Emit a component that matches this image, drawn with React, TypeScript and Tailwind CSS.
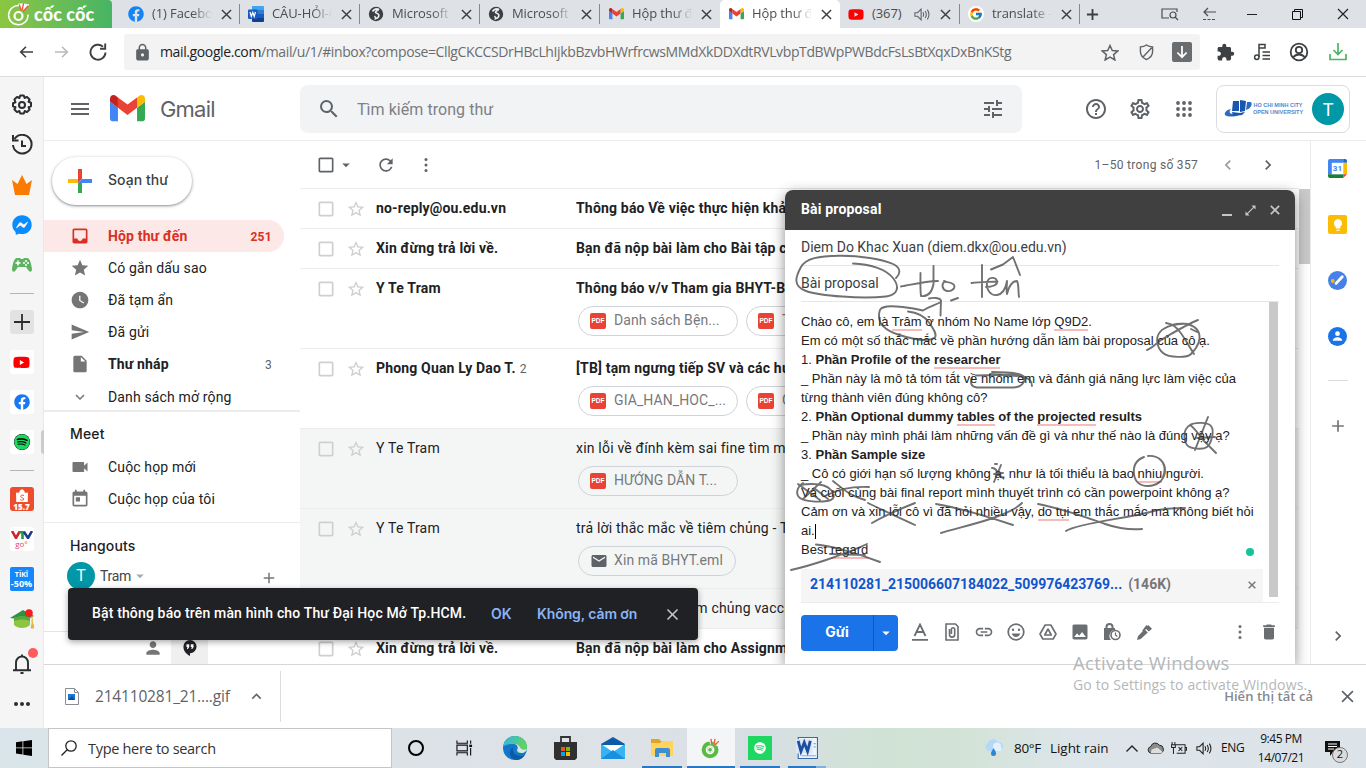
import React from "react";
import {
  MdInbox, MdStar, MdStarBorder, MdWatchLater, MdSend, MdInsertDriveFile, MdKeyboardArrowDown, MdVideocam,
  MdPerson, MdRefresh, MdMoreVert, MdSearch, MdTune, MdHelpOutline, MdChevronLeft, MdChevronRight,
  MdAdd, MdLink, MdImage, MdDelete, MdLock, MdExtension, MdClose, MdEmail, MdMenu, MdArrowDropDown,
  MdKeyboardArrowUp, MdLightbulb, MdToday, MdOutlineSettings, MdCheckBoxOutlineBlank,
} from "react-icons/md";
import { FaFacebook, FaSpotify, FaYoutube, FaFacebookMessenger } from "react-icons/fa";
import { FcGoogle } from "react-icons/fc";

const SEGOE = "font-['Open_Sans','Noto_Sans',sans-serif]";
const ROBOTO = "font-[Roboto,sans-serif]";
const GSANS = "font-[Inter,sans-serif]";

type Kids = { children?: React.ReactNode; className?: string };

function GmailLogo({ className = "" }: { className?: string }) {
  return (
    <svg viewBox="52 42 88 66" className={className}>
      <path fill="#4285f4" d="M58 108h14V74L52 59v43c0 3.32 2.69 6 6 6" />
      <path fill="#34a853" d="M120 108h14c3.32 0 6-2.69 6-6V59l-20 15" />
      <path fill="#fbbc04" d="M120 48v26l20-15v-8c0-7.42-8.47-11.65-14.4-7.2" />
      <path fill="#ea4335" d="M72 74V48l24 18 24-18v26L96 92" />
      <path fill="#c5221f" d="M52 51v8l20 15V48l-5.6-4.2c-5.94-4.45-14.4-.22-14.4 7.2" />
    </svg>
  );
}

function Cross({ className = "", w = 1.6 }: { className?: string; w?: number }) {
  return (
    <svg viewBox="0 0 12 12" className={className} fill="none" stroke="currentColor" strokeWidth={w}>
      <path d="M1 1l10 10M11 1L1 11" />
    </svg>
  );
}

function Dots({ className = "" }: { className?: string }) {
  return (
    <svg viewBox="0 0 20 20" className={className} fill="currentColor">
      <circle cx="10" cy="4.500" r="1.500" />
      <circle cx="10" cy="10" r="1.500" />
      <circle cx="10" cy="15.500" r="1.500" />
    </svg>
  );
}

function AppsGrid({ className = "" }: { className?: string }) {
  return (
    <svg viewBox="0 0 24 24" className={className} fill="currentColor">
      {[6, 12, 18].map((y) => [6, 12, 18].map((x) => <circle key={`${x}-${y}`} cx={x} cy={y} r="1.900" />))}
    </svg>
  );
}

function Speaker({ className = "" }: { className?: string }) {
  return (
    <svg viewBox="0 0 18 14" className={className} fill="none" stroke="currentColor" strokeWidth="1.2">
      <path d="M1 5h3l4-4v12L4 9H1zM10 4.500c1 1.500 1 3.500 0 5M12.500 3c1.700 2.500 1.700 5.500 0 8M15 1.500c2.300 3.500 2.300 7.500 0 11" />
    </svg>
  );
}

function Globe() {
  return (
    <svg viewBox="0 0 16 16" className="size-4">
      <circle cx="8" cy="8" r="7.200" fill="#3c4043" />
      <path d="M4.500 5.500C6 3 9 2.500 10.500 3.200 10 5 7.500 4.800 7.500 6.300c0 1.200 3 .700 3.300 2.500.200 1.500-1 3.200-3.300 4 .3-1.500-.2-2-1-2.800" fill="none" stroke="#e8eaed" strokeWidth="1.700" />
    </svg>
  );
}

function WordIcon() {
  return (
    <svg viewBox="0 0 16 16" className="size-4">
      <path d="M4 0h11a1 1 0 011 1v3.500H4z" fill="#41a5ee" />
      <path d="M4 4h12v4H4z" fill="#2b7cd3" />
      <path d="M4 8h12v4H4z" fill="#185abd" />
      <path d="M4 12h12v3a1 1 0 01-1 1H5a1 1 0 01-1-1z" fill="#103f91" />
      <rect y="3.500" width="9.500" height="9.500" rx="1" fill="#185abd" />
      <path d="M2 6l1.300 4.500L4.800 6.300l1.400 4.200L7.500 6" stroke="#fff" strokeWidth="1.200" fill="none" />
    </svg>
  );
}

function Tab({ icon, title, active, audio, noSep }: { icon: React.ReactNode; title: string; active?: boolean; audio?: boolean; noSep?: boolean }) {
  return (
    <div className={`relative flex h-7 w-[120px] shrink-0 items-center pl-2 ${active ? "rounded-t-[5px] bg-white" : ""}`}>
      <div className="flex size-4 shrink-0 items-center justify-center">{icon}</div>
      <div className={`ml-2 shrink-0 overflow-hidden whitespace-nowrap text-[13px] text-[#4a4d51] tracking-[-0.1px] ${audio ? "w-[34px]" : "w-[62px] [mask-image:linear-gradient(to_right,#000_65%,transparent_97%)]"}`}>{title}</div>
      {audio && <Speaker className="ml-[8px] h-[13px] w-[16px] shrink-0 text-[#5f6368]" />}
      <Cross className={`${audio ? "ml-[10px]" : "ml-[7px]"} size-[11px] shrink-0 text-[#3c4043]`} />
      {!noSep && <div className="ml-auto h-5 w-px bg-[#85888c]" />}
    </div>
  );
}

function CocCocMark({ className = "", line = "#fff" }: { className?: string; line?: string }) {
  return (
    <svg viewBox="0 0 24 24" className={className} fill="none" strokeLinecap="round">
      <path d="M12 3.500A9.700 9.700 0 1021 13" stroke={line} strokeWidth="1.500" />
      <circle cx="11.500" cy="14" r="4" stroke={line} strokeWidth="2.200" />
      <path d="M12 2l4 0-1 6zM17 2l5 1-5 5z" fill={line} stroke={line} strokeWidth="1" />
      <path d="M12.500 3l1.500 5M16.500 2l-1.500 6M21 4l-4.500 5" stroke="#f05a3c" strokeWidth="1.300" />
    </svg>
  );
}

function TabStrip() {
  return (
    <div className={`flex h-7 bg-[#dee1e6] ${SEGOE}`}>
      <div className="mr-2 flex w-28 items-center rounded-tr-[4px] bg-gradient-to-r from-[#8cc63f] to-[#45b464] pl-[7px]">
        <CocCocMark className="size-6" />
        <span className="ml-[3px] font-[Lato,sans-serif] text-[18px] leading-none font-black tracking-[0.1px] text-white">cốc cốc</span>
      </div>
      <Tab icon={<FaFacebook className="size-4 text-[#1284f5]" />} title="(1) Facebook" />
      <Tab icon={<WordIcon />} title="CÂU-HỎI-ÔN" />
      <Tab icon={<Globe />} title="Microsoft Teams" />
      <Tab icon={<Globe />} title="Microsoft Teams" />
      <Tab icon={<GmailLogo className="w-[15px]" />} title="Hộp thư đến" noSep />
      <Tab icon={<GmailLogo className="w-[15px]" />} title="Hộp thư đến" active noSep />
      <Tab icon={<FaYoutube className="size-[17px] text-[#f00]" />} title="(367)" audio />
      <Tab icon={<div className="flex size-4 items-center justify-center rounded-full bg-white"><FcGoogle className="size-3.5" /></div>} title="translate - G" />
      <div className="ml-1.5 flex flex-1 items-center">
        <svg viewBox="0 0 14 14" className="size-[13px]" stroke="#3c4043" strokeWidth="2"><path d="M7 1v12M1 7h12" /></svg>
        <svg viewBox="0 0 18 14" className="ml-[62px] h-[14px] w-[18px]" fill="none" stroke="#4a4d51" strokeWidth="1.200"><path d="M8 11H1V2h15v3M5 2v-.5" /><circle cx="12" cy="8" r="3" /><path d="M14 10l3 3" /></svg>
        <svg viewBox="0 0 14 14" className="ml-[23px] size-[14px]" fill="none" stroke="#4a4d51" strokeWidth="1.200"><path d="M14 5H2M6 1L2 5l4 4" /><path d="M1 12.500h12" strokeDasharray="3 1.500" /></svg>
        <div className="ml-[31px] h-px w-[10px] bg-[#222]" />
        <svg viewBox="0 0 11 11" className="ml-[35px] size-[11px]" fill="none" stroke="#111"><path d="M.5 2.500h8v8h-8zM2.500 2.500v-2h8v8h-2" /></svg>
        <Cross w={1.200} className="ml-[34px] size-[12px] text-[#222]" />
      </div>
    </div>
  );
}

function Toolbar() {
  return (
    <div className={`flex h-[49px] items-center border-b border-[#dadce0] bg-white ${SEGOE}`}>
      <svg viewBox="0 0 16 14" className="ml-[19px] h-[14px] w-[14px]" fill="none" stroke="#3c4043" strokeWidth="1.900"><path d="M16 7H2M8 1L2 7l6 6" /></svg>
      <svg viewBox="0 0 16 14" className="ml-[22px] h-[14px] w-[14px]" fill="none" stroke="#b8babd" strokeWidth="1.900"><path d="M0 7h14M8 1l6 6-6 6" /></svg>
      <svg viewBox="0 0 18 18" className="ml-[20px] size-[18px]" fill="none" stroke="#3c4043" strokeWidth="1.900"><path d="M16.500 9.500A7.500 7.500 0 1114 3.600" /><path d="M16.200 .5v5.200H11" /></svg>
      <div className="ml-[17px] flex h-9 w-[1076px] items-center rounded-[3px] bg-[#f3f3f3] pl-[9px]">
        <MdLock className="size-[19px] text-[#5f6368]" />
        <div className="ml-2 w-[941px] whitespace-nowrap pb-px text-[14px] tracking-[-0.38px] text-[#6a6d70]">
          <span className="text-[#202124]">mail.google.com</span>/mail/u/1/#inbox?compose=CllgCKCCSDrHBcLhIjkbBzvbHWrfrcwsMMdXkDDXdtRVLvbpTdBWpPWBdcFsLsBtXqxDxBnKStg
        </div>
        <svg viewBox="0 0 18 17" className="h-[17px] w-[18px]" fill="none" stroke="#5f6368" strokeWidth="1.500"><path d="M9 1.500l2.300 5 5.500.500-4.200 3.600 1.300 5.400L9 13.200 4.100 16l1.300-5.400L1.200 7l5.500-.500z" /></svg>
        <svg viewBox="0 0 16 18" className="ml-[20px] h-[17px] w-[15px]" fill="none" stroke="#5f6368" strokeWidth="1.500"><path d="M8 1c2 1.500 4 2 6.500 2v5c0 4-3 7-6.500 8.500C4.500 15 1.500 12 1.500 8V3C4 3 6 2.500 8 1zM4 14L13.500 4" /></svg>
        <div className="ml-[18px] flex size-5 items-center justify-center rounded-[2px] bg-[#6a6d70]">
          <svg viewBox="0 0 12 14" className="h-[13px] w-3" fill="none" stroke="#fff" strokeWidth="1.900"><path d="M6 0v12M1 7l5 5 5-5" /></svg>
        </div>
      </div>
      <MdExtension className="ml-[16px] size-[19px] text-[#3c4043]" />
      <svg viewBox="0 0 18 18" className="ml-[18px] size-[18px]" fill="none" stroke="#3c4043" strokeWidth="1.500"><path d="M6 14V1.500h6V5H6M9.500 9H17M9.500 12.500H17M9.500 16H17" /><circle cx="3.800" cy="14.200" r="2.200" /></svg>
      <svg viewBox="0 0 20 20" className="ml-[18px] size-[20px]" fill="none" stroke="#3c4043" strokeWidth="1.800"><circle cx="10" cy="10" r="8.300" /><circle cx="10" cy="8" r="3.200" /><path d="M4 15.500c3-4 9-4 12 0" /></svg>
      <svg viewBox="0 0 18 18" className="ml-[20px] size-[18px]" fill="none" stroke="#4bb563" strokeWidth="1.700"><path d="M9 0v11M4.500 7L9 11.500 13.500 7M1 11v5.500h16V11" /></svg>
    </div>
  );
}

function Cell({ children, className = "" }: Kids) {
  return <div className={`flex h-10 shrink-0 items-center justify-center ${className}`}>{children}</div>;
}

function Rail() {
  return (
    <div className={`flex w-11 shrink-0 flex-col border-r border-[#e8e8e8] bg-[#f5f5f5] pt-2 ${SEGOE}`}>
      <Cell><svg viewBox="0 0 22 22" className="size-[22px]" fill="none" stroke="#2b2d30" strokeWidth="2"><circle cx="11" cy="11" r="3" /><path strokeLinejoin="round" d="M9.200 1.500h3.600l.8 2.500 2.400-1.100 2.600 2.600-1.100 2.300 2.500.900v3.600l-2.500.800 1.100 2.400-2.600 2.600-2.300-1.100-.900 2.500H9.200L8.400 17 6 18.100l-2.600-2.600L4.500 13.200 2 12.300V9.200l2.500-.9L3.400 5.500 6 2.900 8.400 4z" /></svg></Cell>
      <Cell><svg viewBox="0 0 22 22" className="size-[22px]" fill="none" stroke="#2b2d30" strokeWidth="2"><path d="M3.500 5A9.300 9.300 0 112 11M2 1v5.500h5.500M11 6.500V12h4" /></svg></Cell>
      <Cell><svg viewBox="0 0 20 20" className="size-5" fill="#fb7a00"><path d="M0 5l5.500 4L10 0l4.500 9L20 5l-3 15H3z" /></svg></Cell>
      <Cell><FaFacebookMessenger className="size-5 text-[#0a8cff]" /></Cell>
      <Cell><svg viewBox="0 0 20 14" className="h-[14px] w-5"><path d="M5 0h3l1 1h2l1-1h3c3 0 4 5 5 11 0 3-2 3.500-3.500 1.500L14 9H6l-2.500 3.500C2 14.500 0 14 0 11 1 5 2 0 5 0z" fill="#5db35f" /><path d="M3.500 5h5M6 2.500v5" stroke="#fff" strokeWidth="1.500" /><circle cx="14" cy="3" r="1" fill="#fff" /><circle cx="14" cy="7" r="1" fill="#fff" /><circle cx="12" cy="5" r="1" fill="#fff" /><circle cx="16" cy="5" r="1" fill="#fff" /></svg></Cell>
      <div className="flex h-[17px] items-center justify-center"><div className="h-px w-6 bg-[#b5b5b5]" /></div>
      <Cell><div className="flex size-6 items-center justify-center rounded-[3px] bg-[#e2e2e2]"><svg viewBox="0 0 16 16" className="size-4" stroke="#2b2d30" strokeWidth="1.800"><path d="M8 0v16M0 8h16" /></svg></div></Cell>
      <Cell><div className="flex size-6 items-center justify-center rounded-[3px] bg-white"><FaYoutube className="size-[17px] text-[#f00]" /></div></Cell>
      <Cell><div className="flex size-6 items-center justify-center rounded-[3px] bg-white"><FaFacebook className="size-[16px] text-[#1877f2]" /></div></Cell>
      <Cell className="relative"><div className="flex size-6 items-center justify-center rounded-[3px] bg-white"><FaSpotify className="size-[16px] rounded-full bg-black text-[#1ed760]" /></div><div className="absolute right-[-1px] top-2 h-6 w-[3px] rounded-l bg-[#ccc]" /></Cell>
      <div className="flex h-[17px] items-center justify-center"><div className="h-px w-6 bg-[#b5b5b5]" /></div>
      <Cell><div className="flex size-6 flex-col items-center justify-end rounded-[3px] bg-[#ee4d2d]"><svg viewBox="0 0 12 13" className="h-[13px] w-3"><path d="M0 4h12l-.6 9H.6zM3.500 4C3.500-.5 8.500-.5 8.500 4" fill="#fff" stroke="#fff" strokeWidth=".6" /><path d="M8 6.500C6 5.500 4.300 6.500 4.800 7.700s3 1 3 2.300-2 1.600-3.600.6" fill="none" stroke="#ee4d2d" strokeWidth="1" /></svg><span className="text-[8px] leading-[9px] font-extrabold text-white">15.7</span></div></Cell>
      <Cell><div className="flex size-6 flex-col items-center rounded-[3px] bg-white pt-1"><svg viewBox="0 0 22 8" className="h-[8px] w-[22px]" fill="none" strokeWidth="2.600"><path d="M1 0l4 7 4-7" stroke="#d2232a" /><path d="M8 1.300h6M11.500 1v7" stroke="#1a9c47" /><path d="M13 1l4 6 4-7" stroke="#233a8e" /></svg><span className="text-[8px] leading-[9px] text-[#e0455a]">go°</span></div></Cell>
      <Cell><div className="flex size-6 flex-col items-center justify-center rounded-[2px] bg-[#1387fb] text-white"><span className="text-[7px] leading-[9px] font-bold">TÏKÎ</span><span className="text-[9px] leading-[10px] font-bold">-50%</span></div></Cell>
      <Cell><svg viewBox="0 0 24 20" className="h-5 w-6"><path d="M0 9L13 1l11 6-8 4z" fill="#2f9144" /><path d="M4 9c4-2 12-2 16 0v7c-4 4-12 4-16 0z" fill="#8cc63f" /><path d="M4 9c4-2 12-2 16 0v3c-5-2-11-2-16 0z" fill="#55a744" /><path d="M22 7v8l-1 4h3l-1-4" stroke="#e6b23c" fill="#e6b23c" /><circle cx="19" cy="4" r="3.800" fill="#f81b1b" /></svg></Cell>
      <Cell className="relative mt-[5px]"><svg viewBox="0 0 18 20" className="h-5 w-[18px]" fill="none" stroke="#2b2d30" strokeWidth="1.900"><path d="M3 15.500V8.500a6 6 0 0112 0v7M0 16.200h18M7.500 19h3M9 .5V2" /></svg><div className="absolute right-[5px] top-[4px] size-[10px] rounded-full bg-[#ff5a5f]" /></Cell>
      <Cell className="gap-[2px]"><i className="size-1 rounded-full bg-[#2b2d30]" /><i className="size-1 rounded-full bg-[#2b2d30]" /><i className="size-1 rounded-full bg-[#2b2d30]" /></Cell>
    </div>
  );
}

function OuLogo() {
  return (
    <svg viewBox="0 0 28 18" className="h-[18px] w-7">
      <path d="M7 9C2 10 0 13 1 15c3 2 9 2 14 0l6-3c-5 2-13 3-15 1-1-1 0-3 1-4z" fill="#2a6cc0" />
      <path d="M9 1l6 0v10H8zM16 0l6 1-1 10-5 1z" fill="#1a56ad" />
      <path d="M23 2h4c2 3-1 7-5 8z" fill="#2a6cc0" />
      <path d="M8 12l8 1 5-1-3 3-9 1z" fill="#1a56ad" />
    </svg>
  );
}

function GmailHeader() {
  return (
    <div className="flex h-16 shrink-0 items-center border-b border-[#ebebeb] bg-white">
      <MdMenu className="ml-6 size-6 text-[#5f6368]" />
      <GmailLogo className="ml-[18px] w-[35px]" />
      <span className={`ml-[15px] w-[140px] pt-px text-[22px] tracking-[-0.8px] text-[#5f6368] ${GSANS}`}>Gmail</span>
      <div className="flex h-12 w-[722px] items-center rounded-lg bg-[#f1f3f4] pl-[17px] pr-[17px]">
        <MdSearch className="size-6 text-[#5f6368]" />
        <span className={`ml-4 flex-1 pt-0.5 text-[16px] tracking-[0.05px] text-[#7d8085] ${ROBOTO}`}>Tìm kiếm trong thư</span>
        <MdTune className="size-6 text-[#5f6368]" />
      </div>
      <MdHelpOutline className="ml-[62px] size-6 text-[#5f6368]" />
      <MdOutlineSettings className="ml-5 size-6 text-[#5f6368]" />
      <AppsGrid className="ml-5 size-6 text-[#5f6368]" />
      <div className="ml-5 flex h-12 w-[134px] items-center rounded-lg border border-[#dadce0] pl-[7px]">
        <OuLogo />
        <div className="ml-px w-[50px] text-center font-['Liberation_Sans',sans-serif] text-[5.500px] leading-[7px] font-bold text-[#5587c8]">
          <div className="whitespace-nowrap">HO CHI MINH CITY</div>
          <div className="whitespace-nowrap">OPEN UNIVERSITY</div>
        </div>
        <div className={`ml-[9px] flex size-8 items-center justify-center rounded-full bg-[#0097a7] pt-px text-[18px] text-white ${ROBOTO}`}>T</div>
      </div>
    </div>
  );
}

function NavRow({ icon, label, count, kind = "" }: { icon: React.ReactNode; label: string; count?: string; kind?: string }) {
  const tone = kind === "on" ? "bg-[#fce8e6] text-[#d93025] font-bold" : kind === "bold" ? "font-bold text-[#202124]" : "text-[#202124]";
  const iconTone = kind === "on" ? "text-[#d93025]" : "text-[#747577]";
  return (
    <div className={`flex h-8 w-60 items-center rounded-r-2xl pl-[26px] pr-3 text-[14px] ${ROBOTO} ${tone}`}>
      <div className={`flex size-5 items-center justify-center ${iconTone}`}>{icon}</div>
      <span className="ml-[18px] flex-1 whitespace-nowrap tracking-[0.15px]">{label}</span>
      <span className={`pt-px text-[12px] tracking-[0.3px] ${kind === "on" ? "" : "font-normal text-[#5f6368]"}`}>{count}</span>
    </div>
  );
}

function GmailNav() {
  return (
    <div className="flex w-64 shrink-0 flex-col bg-white">
      <div className="ml-2 mt-4 flex h-12 w-[140px] items-center rounded-full bg-white pl-4 shadow-[0_1px_2px_0_rgba(60,64,67,.4),0_1px_3px_1px_rgba(60,64,67,.18)]">
        <svg viewBox="0 0 24 24" className="size-6"><path fill="#ea4335" d="M10 0h4v10l-4 4z" /><path fill="#4285f4" d="M24 10v4H10l4-4z" /><path fill="#34a853" d="M10 14h4v10h-4z" /><path fill="#fbbc04" d="M0 10h10v4H0z" /></svg>
        <span className={`ml-4 pb-[3px] text-[14px] font-medium tracking-[0.05px] text-[#3c4043] ${GSANS}`}>Soạn thư</span>
      </div>
      <div className="mt-[15px] h-[192px] border-b-2 border-[#ececec]">
        <NavRow kind="on" icon={<MdInbox className="size-5" />} label="Hộp thư đến" count="251" />
        <NavRow icon={<MdStar className="size-5" />} label="Có gắn dấu sao" />
        <NavRow icon={<MdWatchLater className="size-5" />} label="Đã tạm ẩn" />
        <NavRow icon={<MdSend className="size-5" />} label="Đã gửi" />
        <NavRow kind="bold" icon={<MdInsertDriveFile className="size-5" />} label="Thư nháp" count="3" />
        <div className="pt-px"><NavRow icon={<MdKeyboardArrowDown className="size-[18px]" />} label="Danh sách mở rộng" /></div>
      </div>
      <div className="h-[111px] border-b border-[#ebebeb] pt-[7px]">
        <div className={`flex h-8 items-center pb-[3px] pl-[26px] text-[14px] font-medium tracking-[0.15px] text-[#202124] ${GSANS}`}>Meet</div>
        <NavRow icon={<MdVideocam className="size-5" />} label="Cuộc họp mới" />
        <NavRow icon={<MdToday className="size-5" />} label="Cuộc họp của tôi" />
      </div>
      <div className="h-[109px] border-b border-[#e4e4e4] pt-[7px]">
        <div className={`flex h-8 items-center pb-0.5 pl-[26px] text-[14px] font-medium tracking-[0.1px] text-[#202124] ${GSANS}`}>Hangouts</div>
        <div className={`flex h-7 items-center pl-[23px] text-[14px] text-[#444] ${ROBOTO}`}>
          <div className="flex size-7 items-center justify-center rounded-full bg-[#0097a7] text-[16px] text-white">T</div>
          <span className="ml-[5px] tracking-[-0.3px]">Tram</span>
          <MdArrowDropDown className="size-[18px] text-[#aaa]" />
          <MdAdd className="ml-[111px] mt-1 size-[18px] text-[#777]" />
        </div>
      </div>
      <div className="flex flex-1 justify-center pr-[2px]">
        <div className="flex w-[37px] items-center justify-center"><MdPerson className="size-[20px] text-[#757575]" /></div>
        <div className="flex w-[37px] items-center justify-center bg-[#efefef]">
          <svg viewBox="0 0 14 17" className="h-[16px] w-[14px]"><path d="M7 0a7 7 0 110 14v3C3 15 0 12 0 7a7 7 0 017-7z" fill="#202124" /><path d="M3.200 4.500h3v3L4.800 9.500h-1l.5-2H3.200zM7.800 4.500h3v3L9.400 9.500h-1l.5-2H7.800z" fill="#fff" /></svg>
        </div>
      </div>
    </div>
  );
}

function Pdf({ name, className = "w-40" }: { name: string; className?: string }) {
  return (
    <div className={`flex h-[30px] shrink-0 items-center rounded-full border border-[#cfd2d8] pl-[11px] ${className}`}>
      {name.endsWith(".eml") ? (
        <MdEmail className="size-[18px] text-[#5f6368]" />
      ) : (
        <div className="flex size-4 items-center justify-center rounded-[2px] bg-[#ea4335] font-['Liberation_Sans',sans-serif] text-[6.500px] font-bold text-white">PDF</div>
      )}
      <span className={`${name.endsWith(".eml") ? "ml-[6px]" : "ml-2"} whitespace-nowrap pb-px text-[14px] tracking-[0.1px] text-[#77797c]`}>{name}</span>
    </div>
  );
}

type Mail = { from: string; n?: string; subject: string; read?: boolean; files?: string[] };
const MAILS: Mail[] = [
  { from: "no-reply@ou.edu.vn", subject: "Thông báo Về việc thực hiện khảo sát" },
  { from: "Xin đừng trả lời về.", subject: "Bạn đã nộp bài làm cho Bài tập của" },
  { from: "Y Te Tram", subject: "Thông báo v/v Tham gia BHYT-BHTN", files: ["Danh sách Bện...", "Thông báo"] },
  { from: "Phong Quan Ly Dao T.", n: "2", subject: "[TB] tạm ngưng tiếp SV và các hướng", files: ["GIA_HAN_HOC_...", "GIA_HAN"] },
  { from: "Y Te Tram", subject: "xin lỗi về đính kèm sai fine tìm mã", read: true, files: ["HƯỚNG DẪN T..."] },
  { from: "Y Te Tram", subject: "trả lời thắc mắc về tiêm chủng - Trả", read: true, files: ["Xin mã BHYT.eml"] },
  { from: "Y Te Tram", subject: "thông báo tiêm chủng vaccine", read: true },
  { from: "Xin đừng trả lời về.", subject: "Bạn đã nộp bài làm cho Assignment" },
];

function MailRow({ m }: { m: Mail }) {
  return (
    <div className={`flex shrink-0 items-start border-b border-[#ebeced] text-[14px] text-[#202124] ${ROBOTO} ${m.files ? "h-20" : "h-10"} ${m.read ? "bg-[#f4f6f6]" : "bg-white"}`}>
      <div className="flex h-10 w-[76px] items-center">
        <MdCheckBoxOutlineBlank className="ml-4 size-5 text-[#cfcfcf]" />
        <MdStarBorder className="ml-2.5 size-5 text-[#cfcfcf]" />
      </div>
      <div className={`flex h-10 w-[200px] items-center pb-px tracking-[0.2px] ${m.read ? "" : "font-bold"}`}>
        <span className={m.read ? "" : "tracking-[0.17px]"}>{m.from}</span>
        {m.n && <span className="ml-1 text-[12px] font-normal text-[#5f6368]">{m.n}</span>}
      </div>
      <div className="flex-1 overflow-hidden">
        <div className={`flex h-[37px] items-center pt-0.5 whitespace-nowrap ${m.read ? "tracking-[0.2px]" : "font-bold tracking-[0.18px]"} ${m.subject.includes("vaccine") ? "ml-[35px]" : ""}`}>{m.subject}</div>
        {m.files && (
          <div className="ml-0.5 flex gap-2">
            {m.files.map((f) => <Pdf key={f} name={f} className={f.endsWith(".eml") ? "w-[158px]" : "w-40"} />)}
          </div>
        )}
      </div>
    </div>
  );
}

function MailList() {
  return (
    <div className="flex w-[1010px] shrink-0 flex-col overflow-hidden bg-white">
      <div className={`flex h-[47px] shrink-0 items-center text-[#5f6368] ${ROBOTO}`}>
        <MdCheckBoxOutlineBlank className="ml-4 size-5 text-[#5f6368]" />
        <MdArrowDropDown className="ml-px size-[18px] text-[#5f6368]" />
        <MdRefresh className="ml-[21px] size-5" />
        <Dots className="ml-5 size-5" />
        <span className="ml-auto text-[12px] tracking-[0.3px]">1–50 trong số 357</span>
        <MdChevronLeft className="ml-5 size-5 text-[#9b9da0]" />
        <MdChevronRight className="ml-5 mr-8 size-5" />
      </div>
      <div className="flex min-h-0 flex-1">
        <div className="flex flex-1 flex-col overflow-hidden border-t border-[#ebeced]">
          {MAILS.map((m, i) => <MailRow key={i} m={m} />)}
        </div>
        <div className="w-[11px]"><div className="mt-px h-[75px] bg-[#c9c9c9]" /></div>
      </div>
    </div>
  );
}

function SidePanel() {
  return (
    <div className="flex flex-1 flex-col items-center border-l border-[#ebebeb] bg-white pr-[2px] pt-[18px]">
      <svg viewBox="0 0 20 20" className="size-[19px]"><path d="M2 0h14v16H0V2a2 2 0 012-2z" fill="#4285f4" /><path d="M16 0h2a2 2 0 012 2v2h-4z" fill="#1967d2" /><path d="M16 4h4v12h-4z" fill="#fbbc04" /><path d="M0 16h16v4H2a2 2 0 01-2-2z" fill="#188038" /><path d="M16 16h4l-4 4z" fill="#ea4335" /><path d="M4 4h12v12H4z" fill="#fff" /><text x="10" y="13" textAnchor="middle" fontSize="8.500" fontWeight="700" fill="#4285f4" fontFamily="Roboto, sans-serif">31</text></svg>
      <div className="mt-[37px] flex size-[19px] items-center justify-center rounded-[2px] bg-[#fbbc04]"><MdLightbulb className="size-[14px] text-white" /></div>
      <svg viewBox="0 0 20 20" className="mt-[37px] size-[19px]"><circle cx="10" cy="10" r="10" fill="#4680e8" /><circle cx="5" cy="10.500" r="2" fill="#fbbc04" /><path d="M8.500 13L15 6" stroke="#fff" strokeWidth="3" strokeLinecap="round" /></svg>
      <svg viewBox="0 0 20 20" className="mt-[37px] size-[19px]"><circle cx="10" cy="10" r="10" fill="#1a73e8" /><circle cx="10" cy="7" r="2.500" fill="#fff" /><path d="M5 14.500c0-5 10-5 10 0z" fill="#fff" /></svg>
      <div className="mt-[34px] h-px w-5 bg-[#dadce0]" />
      <MdAdd className="mt-[35px] size-5 text-[#747577]" />
      <MdChevronRight className="mb-[18px] mt-auto size-5 text-[#5f6368]" />
    </div>
  );
}

function U({ children }: Kids) {
  return <span className="border-b-2 border-[#f5bcba]">{children}</span>;
}

function Scribbles() {
  return (
    <svg viewBox="785 190 510 474" className="pointer-events-none absolute inset-0 h-full w-full" fill="none" stroke="#3a3a3a" strokeOpacity=".72" strokeWidth="1.900" strokeLinecap="round" strokeLinejoin="round">
      <path d="M853 263.500C870 264 886 269 893 278S898 295 886 296.500C862 299 820 296 806 291S796 276 801 267s18-11 38-11.300 44 3.500 54 8.300 6 11 3 14" />
      <path d="M901 286.500c10-1.500 22-5 37-5.500M920.500 273c0 8-.5 16 .5 23 7 1 11-4 12.500-12v-18M945 281c-4 3-3 9 2 10s10-4 6-7-7-1-9-3M951 300.500l7-2.500" />
      <path d="M982 265v32M971.500 283c9-1 18-1 26-1.500M986 287c6 0 12-2 11-6s-9-5-10 2 4 13 10 12 9-8 10-14c0 5-1 9 0 13 2-8 5-13 10-13 2 4 1 9 2 16M991 269.500l12-5 10-7.500 7 18" />
      <path d="M908 311.500c9 1 16 4 21 11s8 12 6 15c-8 5-25 1-37-3s-19-10-19-18 2-9 8-10 24 1 36 4c6-4 11-5 17-8M929 298.500c4-1 11-1 12 2l-.500 15" />
      <path d="M1147 350c6-2 10-8 17-12s24-14 34-18M1166 323c7 1 10 4 14 9s9 14 14 22M1172 325c10-3 22-1 26 6s0 16-7 23c-4 4-22 4-28-1s-8-15-3-21 17-9 28-8M1191 329l6 3" />
      <path d="M972 378c-2 5-1 9 5 9.500h36c7 0 11-4 12-9l-9-4-40 1M992 372c14 0 28 1 31 4s8 1 9 10M990 374l27 2" />
      <path d="M1190 425c3-2 17-4 21 1s0 18-4 21-17 2-20-2-5-15 3-20M1208 417l-13 33M1190 425c6 4 10 12 15 17l11 11M1197 438l18-1" />
      <path d="M1144 457c-8 3-11 9-10 17s6 12 14 12 16-5 17-14-6-17-17-16M1163 463c2 4 2 9 0 14" />
      <path d="M992 468c4 0 5 3 6 6l5 4M1001 465c-2 5-4 10-7 17M995 464h2M994 474l9-1" />
      <path d="M799 485c14-2 27-1 32 5s3 10-4 11-22 1-27-3-3-11 3-15M803 499l18-17M798 484l22 16M814 488l14 11M833 481c9 7 17 15 32 19M827 495c10-5 24-9 42-8" />
      <path d="M868 503c12 6 30 14 47 22M872 523c12-7 28-14 43-20M936 504c18 3 50 12 77 21M941 533c18-6 66-15 81-30M1038 504c26 5 50 14 67 20 12 4 25 6 37 5M1066 531c12-8 64-13 84-19 12-4 24-4 35-4" />
      <path d="M816 544.500c15 1 45 10 64 17.500M791 570c18-4 50-14 76-26M830 554l35 1" />
    </svg>
  );
}

function Compose() {
  return (
    <div className={`absolute left-[785px] top-[113px] flex h-[474px] w-[510px] flex-col rounded-t-lg bg-white shadow-[0_4px_14px_rgba(0,0,0,.45)] ${ROBOTO}`}>
      <div className="flex h-10 shrink-0 items-center rounded-t-lg bg-[#404040] pl-4 pr-[15px] text-[14px] font-bold text-white">
        <span className="flex-1 pb-0.5 tracking-[0.17px]">Bài proposal</span>
        <div className="mt-[9px] h-[2px] w-[10px] bg-[#c4c7ca]" />
        <svg viewBox="0 0 12 12" className="ml-[13px] size-[11px]" fill="#c4c7ca" stroke="#c4c7ca"><path d="M2 10L10 2" strokeWidth="1.300" /><path d="M7 .5h4.500V5zM.5 7v4.500H5z" stroke="none" /></svg>
        <Cross w={2} className="ml-[14px] size-[10px] text-[#c4c7ca]" />
      </div>
      <div className="mx-4 flex h-9 shrink-0 items-center border-b border-[#e6e6e6] text-[14px] tracking-[-0.01px] text-[#3c4043]">Diem Do Khac Xuan (diem.dkx@ou.edu.vn)</div>
      <div className="mx-4 flex h-9 shrink-0 items-center border-b border-[#e6e6e6] text-[14px] text-[#3c4043]">Bài proposal</div>
      <div className="flex h-[295px] shrink-0 pl-4">
        <div className="flex w-[468px] flex-col pt-[10px]">
          <div className="h-[257px] whitespace-nowrap font-['Liberation_Sans',sans-serif] text-[13px] leading-[19px] text-[#222]">
            <p>Chào cô, em là <U>Trâm</U> ở nhóm No Name lớp <U>Q9D2</U>.</p>
            <p>Em có một số thắc mắc về phần hướng dẫn làm bài proposal của cô ạ.</p>
            <p>1. <b>Phần Profile of the <U>researcher</U></b></p>
            <p>_ Phần này là mô tả tóm tắt về nhóm em và đánh giá năng lực làm việc của</p>
            <p>từng thành viên đúng không cô?</p>
            <p>2. <b>Phần Optional dummy <U>tables</U> of the <U>projected</U> results</b></p>
            <p>_ Phần này mình phải làm những vấn đề gì và như thế nào là đúng vậy ạ?</p>
            <p>3. <b>Phần Sample size</b></p>
            <p>_ Cô có giới hạn số lượng không ạ, như là tối thiểu là bao <U>nhiu</U> người.</p>
            <p>Và cuối cùng bài final report mình thuyết trình có cần powerpoint không ạ?</p>
            <p>Cảm ơn và xin lỗi cô vì đã hỏi nhiều vậy, <U>do tụi</U> em thắc mắc mà không biết hỏi</p>
            <p>ai.<span className="inline-block h-[15px] w-px bg-black align-middle" /></p>
            <p className="flex items-center"><span>Best <U>regard</U></span><i className="ml-auto mr-[15px] mt-1 size-2 rounded-full bg-[#15c39a]" /></p>
          </div>
          <div className="flex w-[462px] flex-1 items-center bg-[#f5f5f5] pl-[9px] pr-[7px] pt-[3px] text-[14px] font-bold">
            <span className="tracking-[-0.04px] text-[#15c]">214110281_215006607184022_509976423769...</span>
            <span className="ml-[6px] flex-1 text-[#777]">(146K)</span>
            <Cross w={2.200} className="size-2 text-[#777]" />
          </div>
        </div>
        <div className="w-[9px] bg-[#c9c9c9]" />
      </div>
      <div className="mx-4 h-[6px] shrink-0 border-b border-[#ececec]"><div className="h-[5px] w-[462px] bg-[#f5f5f5]" /></div>
      <div className="flex flex-1 items-start px-4 pt-[12px] text-[#6b6e71]">
        <div className={`flex h-9 w-[97px] rounded-[4px] bg-[#1a73e8] text-[14px] font-bold text-white ${GSANS}`}>
          <div className="flex w-[72px] items-center justify-center pb-[3px]">Gửi</div>
          <div className="flex flex-1 items-center justify-center border-l border-[#1259b8]"><MdArrowDropDown className="size-[18px]" /></div>
        </div>
        <div className="flex h-[34px] flex-1 items-center pl-3">
          <svg viewBox="0 0 16 18" className="mx-0.5 h-[18px] w-4" fill="none" stroke="currentColor" strokeWidth="1.800"><path d="M2.500 13L8 1.500 13.500 13M4.500 9h7M0 16.800h16" /></svg>
          <svg viewBox="0 0 14 18" className="ml-[15px] h-[18px] w-[14px]" fill="none" stroke="currentColor" strokeWidth="1.600"><path d="M1 1h9.500L13 3.500V17H1z" /><path d="M4.500 6v5.500a2.600 2.600 0 005.200 0V6a1.700 1.700 0 00-3.300 0v5" /></svg>
          <MdLink className="ml-[15px] size-5" />
          <svg viewBox="0 0 18 18" className="ml-[13px] size-[18px]" fill="none" stroke="currentColor" strokeWidth="1.700"><circle cx="9" cy="9" r="7.800" /><path d="M4.800 10.500h8.400c-1 4.500-7.400 4.500-8.400 0z" fill="currentColor" stroke="none" /><circle cx="6" cy="6.800" r="1.200" fill="currentColor" stroke="none" /><circle cx="12" cy="6.800" r="1.200" fill="currentColor" stroke="none" /></svg>
          <svg viewBox="0 0 18 16" className="ml-[14px] h-4 w-[18px]" fill="none" stroke="currentColor" strokeWidth="1.600" strokeLinejoin="round"><path d="M6.200 1h5.600l5.200 9-2.800 5H3.800L1 10z" /><path d="M9 5l3.300 6H5.700z" /></svg>
          <MdImage className="ml-[13px] size-5" />
          <svg viewBox="0 0 18 18" className="ml-[13px] size-[18px]"><path d="M2.500 5V4a4 4 0 018 0v1H12v2a6 6 0 00-4 10H1V5z" fill="currentColor" /><path d="M4.500 5V4a2 2 0 014 0v1z" fill="#fff" /><circle cx="12.500" cy="12" r="4.500" fill="#fff" stroke="currentColor" strokeWidth="1.600" /><path d="M12.500 9.500V12l1.800 1.500" fill="none" stroke="currentColor" strokeWidth="1.200" /></svg>
          <svg viewBox="0 0 16 16" className="ml-[16px] size-[15px]" fill="currentColor"><path d="M12 0l4 4-3.500 3L9 3.500zM8 4.500L11.500 8 4 15l-4 1 1-4zM10 0l2 2-5 5-1.500-1z" /></svg>
          <Dots className="ml-auto mr-[9px] size-5" />
          <MdDelete className="size-[20px]" />
        </div>
      </div>
      <Scribbles />
    </div>
  );
}

function Toast() {
  return (
    <div className={`absolute left-[68px] top-[511px] flex h-[52px] w-[630px] items-center rounded bg-[#202124] pb-0.5 pl-6 text-[14px] shadow-[0_2px_6px_rgba(0,0,0,.35)] ${ROBOTO}`}>
      <span className="w-[399px] font-medium whitespace-nowrap tracking-[0.15px] text-white">Bật thông báo trên màn hình cho Thư Đại Học Mở Tp.HCM.</span>
      <span className={`w-[46px] font-semibold text-[#8ab4f8] ${GSANS}`}>OK</span>
      <span className={`w-[126px] font-semibold tracking-[-0.1px] whitespace-nowrap text-[#8ab4f8] ${GSANS}`}>Không, cảm ơn</span>
      <MdClose className="mt-0.5 size-[19px] text-[#c4c7ca]" />
    </div>
  );
}

function Shelf() {
  return (
    <div className={`relative flex h-16 shrink-0 items-center border-t border-[#d5d7da] bg-white ${SEGOE}`}>
      <svg viewBox="0 0 14 17" className="ml-[21px] h-[17px] w-[14px]"><path d="M.5.5h9l4 4v12H.5z" fill="#fff" stroke="#8a8d91" /><path d="M9.500.5v4h4" fill="none" stroke="#8a8d91" /><path d="M3 6h7v6H3z" fill="#1c78d0" /><path d="M3 12l4-4 3 4z" fill="#104f94" /></svg>
      <span className="ml-4 w-[152px] whitespace-nowrap text-[15.500px] tracking-[-0.18px] text-[#5f6368]">214110281_21....gif</span>
      <MdKeyboardArrowUp className="ml-0 size-[19px] text-[#5f6368]" />
      <div className="ml-[14px] h-[51px] w-px bg-[#dadce0]" />
      <span className="ml-auto whitespace-nowrap text-[13px] font-semibold tracking-[0.05px] text-[#85888c]">Hiển thị tất cả</span>
      <Cross w={1.500} className="ml-[28px] mr-[12px] size-[13px] text-[#5f6368]" />
      <div className="absolute left-[1029px] top-[-13px] whitespace-nowrap text-[#b5b7b9]">
        <div className="text-[18.500px] leading-[21px] tracking-[0.3px]">Activate Windows</div>
        <div className="text-[14px] leading-[24px] tracking-[0.14px]">Go to Settings to activate Windows.</div>
      </div>
    </div>
  );
}

function TaskButton({ children, className = "", line = "" }: Kids & { line?: string }) {
  return (
    <div className={`flex h-10 flex-col items-center ${className}`}>
      <div className="flex h-[38px] w-full items-center justify-center pt-0.5">{children}</div>
      <div className={`h-0.5 w-full ${line}`} />
    </div>
  );
}

function Taskbar() {
  return (
    <div className={`flex h-10 shrink-0 items-center bg-[linear-gradient(to_right,#d9e5ea_0%,#dde2e6_45%,#d7dfe4_56%,#cfe2d4_65%,#d2e3d6_70%,#dde5ea_79%,#dce4ea_100%)] text-[#111] ${SEGOE}`}>
      <div className="flex w-12 items-center justify-center">
        <svg viewBox="0 0 16 16" className="size-4"><path d="M0 2.200l6.500-.9v6.200H0zM7.300 1.200L16 0v7.500H7.300zM0 8.300h6.500v6.200L0 13.600zM7.300 8.300H16V16l-8.700-1.200z" fill="#000" /></svg>
      </div>
      <div className="flex h-10 w-[344px] items-center border border-[#c3c6c9] bg-white pl-[12px]">
        <svg viewBox="0 0 16 16" className="size-4" fill="none" stroke="#222" strokeWidth="1.300"><circle cx="10" cy="6" r="5.200" /><path d="M6.200 9.700L.5 15.500" /></svg>
        <span className="ml-[11px] pt-px text-[14.500px] tracking-[-0.3px] text-[#333]">Type here to search</span>
      </div>
      <TaskButton className="w-12"><div className="size-4 rounded-full border-2 border-black" /></TaskButton>
      <TaskButton className="w-12"><svg viewBox="0 0 18 16" className="h-4 w-[17px]" fill="none" stroke="#111" strokeWidth="1.200"><path d="M1 0v3h11V0M1 16v-3h11v3M1 5h11v6H1zM15.500 0v3.500M15.500 8v8" /><path d="M14 4.500h3v2.500h-3z" fill="#111" stroke="none" /></svg></TaskButton>
      <TaskButton className="w-[54px]"><svg viewBox="0 0 24 24" className="size-6"><defs><linearGradient id="e1" x1="0" y1="0" x2="1" y2=".3"><stop stopColor="#31b5e8" /><stop offset="1" stopColor="#62d45c" /></linearGradient></defs><circle cx="12" cy="12" r="12" fill="#1277cc" /><path d="M0 11C1 4 6 0 12 0c7 0 12 5 12 11 0 4-3 6-6 6s-5-1-4-3c2-3 0-6-4-6-5 0-9 1-10 3z" fill="url(#e1)" /><path d="M13 24C6 23 5 14 10 11c-1 5 2 9 8 9 2 0 3-.5 4-1-2 3-5 5-9 5z" fill="#0c59a4" /><path d="M14 14c2-2 .500-5-2-6 6 0 4 8 12 5-1 4-7 6-10 1z" fill="#dfe3e8" /></svg></TaskButton>
      <TaskButton className="w-[46px]"><svg viewBox="0 0 23 24" className="h-6 w-[23px]"><path d="M7 6V1h9v5" fill="none" stroke="#333" strokeWidth="1.800" /><path d="M0 6h23v16l-2 2H2l-2-2z" fill="#303030" /><path d="M7 11h4v4H7z" fill="#f25022" /><path d="M12 11h4v4h-4z" fill="#7fba00" /><path d="M7 16h4v4H7z" fill="#00a4ef" /><path d="M12 16h4v4h-4z" fill="#ffb900" /></svg></TaskButton>
      <TaskButton className="w-[50px]"><svg viewBox="0 0 24 22" className="h-[22px] w-6"><path d="M0 7L12 0l12 7v3H0z" fill="#0f5ba7" /><path d="M2 8h20v8H2z" fill="#fff" /><path d="M0 7l12 8L24 7v15H0z" fill="#35b4f2" /><path d="M0 22L12 13l12 9z" fill="#1a8fe0" /></svg></TaskButton>
      <TaskButton className="mx-1 w-10" line="bg-[#2a78c4]"><svg viewBox="0 0 22 20" className="h-5 w-[22px]"><path d="M0 1h8l2 2h11v5H0z" fill="#e0a526" /><path d="M0 5h9l2-2h11v15H0z" fill="#ffd45e" /><path d="M4 12a2 2 0 012-2h11a2 2 0 012 2v7h-4v-4H8v4H4z" fill="#3f8fd0" /></svg></TaskButton>
      <TaskButton className="ml-px w-12 bg-[#f3f5f7]" line="bg-[#2a78c4]">
        <svg viewBox="0 0 24 24" className="size-[22px]" fill="none"><circle cx="11" cy="14" r="6.200" stroke="#5cb947" strokeWidth="6" /><circle cx="11" cy="14" r="4" stroke="#fff" strokeWidth="1.500" /><circle cx="11" cy="14" r="2" fill="#5cb947" /><path d="M11 9l-1-8h4zM14 9l3-9 3 2zM16 10l7-6 1 4z" fill="#f4f5f7" /><path d="M12 2l.6 5M16.500 2L15 8M20.500 4.500L16 9" stroke="#f05a3c" strokeWidth="1.500" /></svg>
      </TaskButton>
      <TaskButton className="ml-[5px] w-10" line="bg-[#2a78c4]"><div className="flex size-6 items-center justify-center bg-[#1ed760]"><FaSpotify className="size-3 text-white" /></div></TaskButton>
      <TaskButton className="ml-[8px] w-[38px]" line="bg-[linear-gradient(to_right,#2a78c4_75%,#7fb0e0_75%)]"><svg viewBox="0 0 20 20" className="size-[22px]"><path d="M2 .5h17.500v19H2z" fill="#eef4fc" stroke="#3a68ad" /><path d="M16 6h2M16 9h2M5 17h13" stroke="#8aa9d6" /><rect x="0" y="2" width="15" height="13" fill="#dbe7f8" /><path d="M2 3.500l2.500 9.500L7.500 5l3 8L13 3.500" fill="none" stroke="#1d4f9e" strokeWidth="2.600" /></svg></TaskButton>
      <div className="ml-[157px] flex items-center">
        <svg viewBox="0 0 20 18" className="h-[18px] w-5"><path d="M5 12a4.500 4.500 0 010-8 5.500 5.500 0 0110-1 4.500 4.500 0 011 9z" fill="#b4d8f6" /><path d="M10 7a4 4 0 018 1 3 3 0 010 4h-8z" fill="#e3f1fc" /><path d="M10.500 9c2 3 2.500 4 2.500 5.500a2.500 2.500 0 01-5 0C8 13 9 12 10.500 9z" fill="#2c86d8" /></svg>
        <span className="ml-[11px] w-[36px] whitespace-nowrap text-[13.500px] tracking-[-0.3px]">80°F</span>
        <span className="w-[76px] whitespace-nowrap text-[13.500px] tracking-[-0.05px]">Light rain</span>
        <svg viewBox="0 0 12 7" className="h-[7px] w-3" fill="none" stroke="#222" strokeWidth="1.400"><path d="M.5 6.500L6 1l5.500 5.500" /></svg>
        <svg viewBox="0 0 18 12" className="ml-[9px] h-3 w-[17px]"><path d="M4 11.500a3.600 3.600 0 010-7A5 5 0 0113 3a4.300 4.300 0 011 8.500z" fill="#8b8b8b" stroke="#222" /><path d="M4 11.500l1-4 6-2 6 5-3 1z" fill="#ddd" /></svg>
        <svg viewBox="0 0 18 14" className="ml-[7px] h-[13px] w-[17px]" fill="none" stroke="#222" strokeWidth="1.100"><path d="M5 3h10v9H6M15 6h1.500v3H15M8 5.500l4 4M12 5.500l-4 4M1 0v3M4 0v3M.500 3h4v3h-4zM2.500 6v7" /></svg>
        <Speaker className="ml-[8px] h-[13px] w-[16px] text-[#222]" />
        <span className="ml-[9px] w-[30px] text-[12px] tracking-[-0.4px]">ENG</span>
        <div className="w-[60px] text-center text-[12px] leading-[19px] tracking-[-0.45px] whitespace-nowrap"><div>9:45 PM</div><div>14/07/21</div></div>
        <div className="relative ml-[14px]">
          <svg viewBox="0 0 15 15" className="size-[15px]"><path d="M0 0h15v11H8l-3 4v-4H0z" fill="#111" /><path d="M3 3h9M3 5.500h9M3 8h6" stroke="#fff" /></svg>
          <div className="absolute left-[7px] top-[6px] flex size-4 items-center justify-center rounded-full border border-[#777] bg-[#d8dcdf] text-[11px]">2</div>
        </div>
      </div>
    </div>
  );
}

export default function App() {
  return (
    <div className="flex h-[768px] w-[1366px] flex-col overflow-hidden bg-white">
      <TabStrip />
      <Toolbar />
      <div className="relative flex min-h-0 flex-1">
        <Rail />
        <div className="flex min-w-0 flex-1 flex-col">
          <div className="flex min-h-0 flex-1 flex-col">
            <GmailHeader />
            <div className="flex min-h-0 flex-1 overflow-hidden">
              <GmailNav />
              <MailList />
              <SidePanel />
            </div>
          </div>
          <div className="relative z-10"><Shelf /></div>
        </div>
        <Compose />
        <Toast />
      </div>
      <div className="relative z-20"><Taskbar /></div>
    </div>
  );
}
